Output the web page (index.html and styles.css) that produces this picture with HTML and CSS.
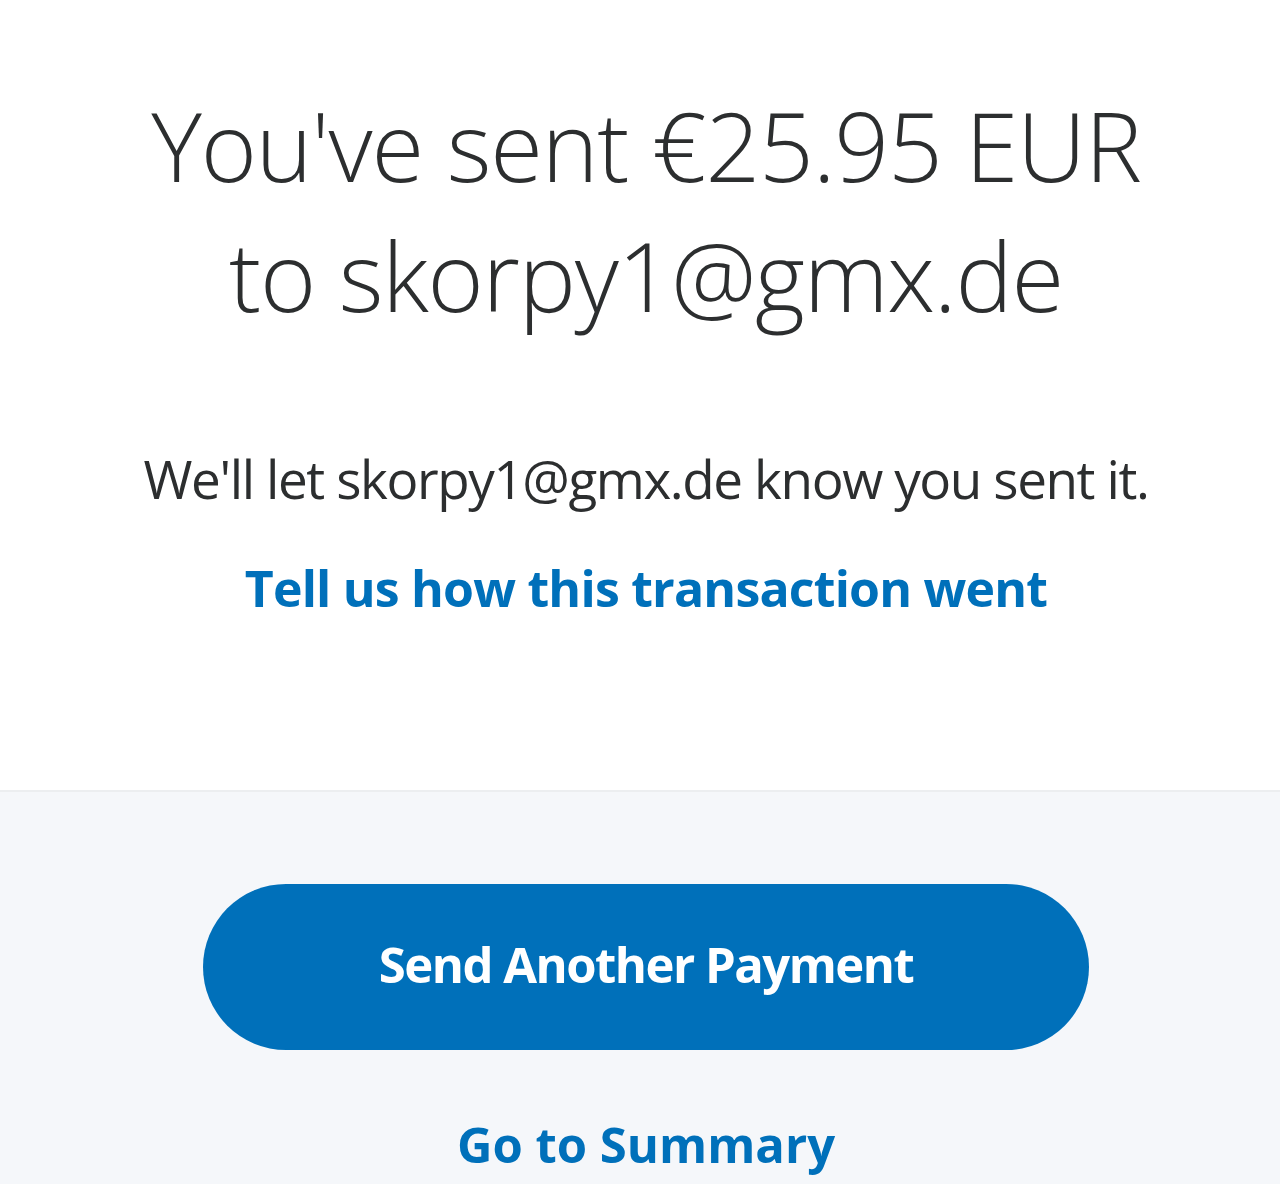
FILE: index.html
```html
<!DOCTYPE html>
<html>
<head>
<meta charset="utf-8">
<link rel="stylesheet" href="styles.css">
</head>
<body>
<main class="page">
  <section class="top">
    <h1 class="title">You've sent €25.95 EUR<br>to skorpy1@gmx.de</h1>
    <p class="note">We'll let skorpy1@gmx.de know you sent it.</p>
    <a class="feedback" href="#">Tell us how this transaction went</a>
  </section>
  <section class="bottom">
    <button class="primary">Send Another Payment</button>
    <a class="summary" href="#">Go to Summary</a>
  </section>
</main>
</body>
</html>
```

FILE: styles.css
```css
html, body {
  margin: 0;
  padding: 0;
  background: #ffffff;
}
.page {
  font-family: "Open Sans", "Noto Sans", sans-serif;
  width: 1280px;
  height: 1184px;
  overflow: hidden;
  display: flex;
  flex-direction: column;
}
.top {
  height: 790px;
  display: flex;
  flex-direction: column;
  align-items: center;
  box-sizing: border-box;
  padding: 80px 0 0 12px;
}
.title {
  margin: 0;
  font-weight: 300;
  font-size: 96px;
  line-height: 130px;
  letter-spacing: -1.2px;
  color: #2c2e2f;
  text-align: center;
}
.note {
  margin: 109px 0 0;
  font-size: 53px;
  line-height: 60px;
  letter-spacing: -1.4px;
  color: #2c2e2f;
}
.feedback {
  margin-top: 49px;
  font-size: 50px;
  line-height: 60px;
  letter-spacing: -0.8px;
  font-weight: 700;
  color: #0070ba;
  text-decoration: none;
}
.bottom {
  flex: 1;
  background: #f5f7fa;
  border-top: 2px solid #eceef0;
  display: flex;
  flex-direction: column;
  align-items: center;
  padding: 92px 0 0 12px;
}
.primary {
  width: 886px;
  height: 166px;
  padding: 0 0 6px;
  border: none;
  border-radius: 83px;
  background: #0070ba;
  color: #ffffff;
  font-family: "Open Sans", "Noto Sans", sans-serif;
  font-size: 49px;
  letter-spacing: -1.5px;
  font-weight: 700;
}
.summary {
  margin-top: 64px;
  font-size: 49px;
  line-height: 60px;
  font-weight: 700;
  color: #0070ba;
  text-decoration: none;
}
```
